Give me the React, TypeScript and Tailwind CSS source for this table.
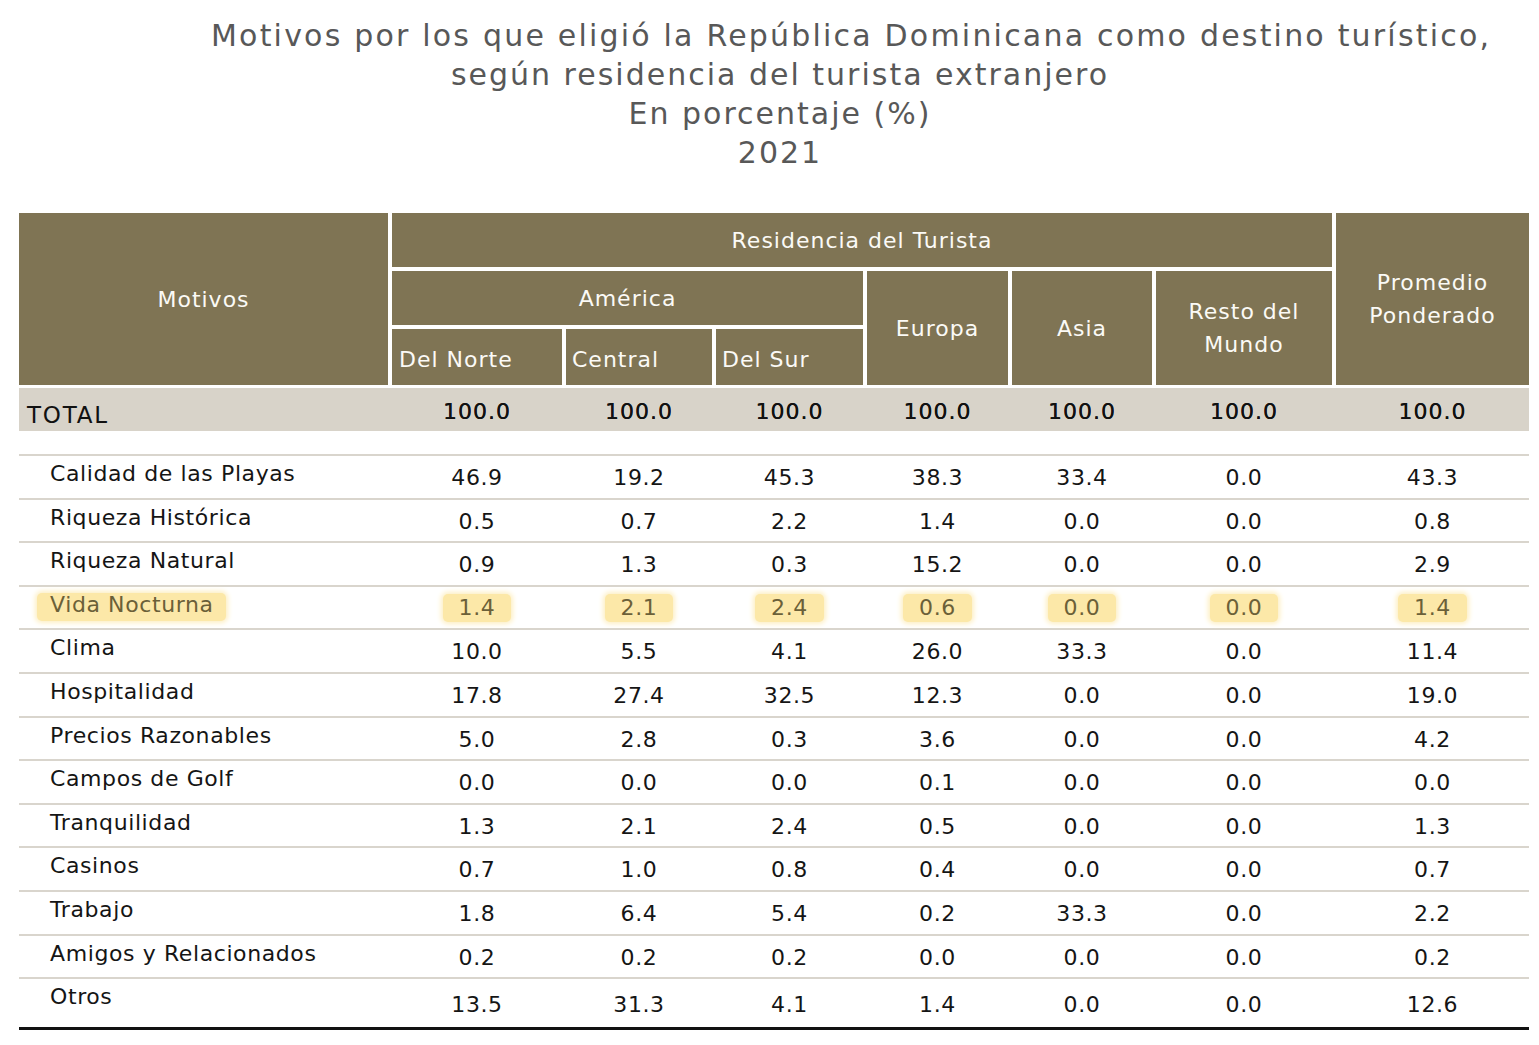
import React from "react";

const font = { fontFamily: "'DejaVu Sans', Verdana, sans-serif" };

const cols = "grid grid-cols-[369px_170px_146px_147px_141px_140px_176px_193px] gap-x-[4px]";

type Row = { label: string; values: string[]; highlight?: boolean };

const rows: Row[] = [
  { label: "Calidad de las Playas", values: ["46.9", "19.2", "45.3", "38.3", "33.4", "0.0", "43.3"] },
  { label: "Riqueza Histórica", values: ["0.5", "0.7", "2.2", "1.4", "0.0", "0.0", "0.8"] },
  { label: "Riqueza Natural", values: ["0.9", "1.3", "0.3", "15.2", "0.0", "0.0", "2.9"] },
  { label: "Vida Nocturna", values: ["1.4", "2.1", "2.4", "0.6", "0.0", "0.0", "1.4"], highlight: true },
  { label: "Clima", values: ["10.0", "5.5", "4.1", "26.0", "33.3", "0.0", "11.4"] },
  { label: "Hospitalidad", values: ["17.8", "27.4", "32.5", "12.3", "0.0", "0.0", "19.0"] },
  { label: "Precios Razonables", values: ["5.0", "2.8", "0.3", "3.6", "0.0", "0.0", "4.2"] },
  { label: "Campos de Golf", values: ["0.0", "0.0", "0.0", "0.1", "0.0", "0.0", "0.0"] },
  { label: "Tranquilidad", values: ["1.3", "2.1", "2.4", "0.5", "0.0", "0.0", "1.3"] },
  { label: "Casinos", values: ["0.7", "1.0", "0.8", "0.4", "0.0", "0.0", "0.7"] },
  { label: "Trabajo", values: ["1.8", "6.4", "5.4", "0.2", "33.3", "0.0", "2.2"] },
  { label: "Amigos y Relacionados", values: ["0.2", "0.2", "0.2", "0.0", "0.0", "0.0", "0.2"] },
  { label: "Otros", values: ["13.5", "31.3", "4.1", "1.4", "0.0", "0.0", "12.6"] },
];

const head = "bg-[#7f7454] text-[#fbfaf6] text-[22px] leading-[33px] tracking-[1px]";

function Glow({ children, className = "" }: { children: React.ReactNode; className?: string }) {
  return (
    <span className={`block h-[28px] rounded-[5px] bg-[#fce8a8] shadow-[0_0_5px_2px_#fdefc3] ${className}`}>
      {children}
    </span>
  );
}

export default function App() {
  return (
    <div className="w-[1539px] h-[1045px] bg-white overflow-hidden" style={font}>
      {/* Title */}
      <div className="pt-[16px] text-[30px] leading-[39px] text-[#585858] tracking-[2px]">
        <p className="pl-[211px] whitespace-nowrap tracking-[2.2px]">
          Motivos por los que eligió la República Dominicana como destino turístico,
        </p>
        <div className="w-[1560px] text-center">
          <p>según residencia del turista extranjero</p>
          <p>En porcentaje (%)</p>
          <p>2021</p>
        </div>
      </div>

      <div className="ml-[19px] w-[1510px] mt-[41px]">
        {/* Header */}
        <div className={`${cols} grid-rows-[54px_54px_56px] gap-y-[4px]`}>
          <div className={`${head} row-span-3 flex items-center justify-center`}>Motivos</div>
          <div className={`${head} col-span-6 flex items-center justify-center`}>Residencia del Turista</div>
          <div className={`${head} row-span-3 flex items-center justify-center text-center`}>
            Promedio
            <br />
            Ponderado
          </div>
          <div className={`${head} col-span-3 flex items-center justify-center`}>América</div>
          <div className={`${head} row-span-2 flex items-center justify-center`}>Europa</div>
          <div className={`${head} row-span-2 flex items-center justify-center`}>Asia</div>
          <div className={`${head} row-span-2 flex items-center justify-center text-center`}>
            Resto del
            <br />
            Mundo
          </div>
          <div className={`${head} col-start-2 flex items-center pl-[7px] pt-[4px]`}>Del Norte</div>
          <div className={`${head} flex items-center pl-[6px] pt-[4px]`}>Central</div>
          <div className={`${head} flex items-center pl-[6px] pt-[4px]`}>Del Sur</div>
        </div>

        {/* Total */}
        <div className={`${cols} mt-[3px] h-[43px] bg-[#d8d3c9] text-[22px] text-[#111]`}>
          <div className="pl-[8px] pt-[10px] text-[23px] tracking-[1.8px]">TOTAL</div>
          {["100.0", "100.0", "100.0", "100.0", "100.0", "100.0", "100.0"].map((v, i) => (
            <div key={i} className="text-center pt-[7px] tracking-[1px] [text-shadow:0_0_0.5px_#111]">
              {v}
            </div>
          ))}
        </div>

        {/* Body */}
        <div className="mt-[23px] border-b-[3px] border-[#111]">
          {rows.map((r, idx) => {
            const last = idx === rows.length - 1;
            return (
              <div
                key={r.label}
                className={`${cols} border-t-[2.5px] border-[#d9d5cd] text-[22px] tracking-[0.6px] ${
                  last ? "h-[50px]" : "h-[43.6px]"
                } ${r.highlight ? "text-[#6b6038]" : "text-[#151515]"}`}
              >
                {r.highlight ? (
                  <div className="flex items-start pl-[18px] pt-[6.5px]">
                    <Glow className="pl-[13px] pr-[12px] leading-[24px]">{r.label}</Glow>
                  </div>
                ) : (
                  <div className="pl-[31px] pt-[4px] leading-[28px]">{r.label}</div>
                )}
                {r.values.map((v, i) =>
                  r.highlight ? (
                    <div key={i} className="flex justify-center items-start pt-[7px]">
                      <Glow className="px-[16px] leading-[28px]">{v}</Glow>
                    </div>
                  ) : (
                    <div key={i} className={`text-center leading-[28px] ${last ? "pt-[12px]" : "pt-[8px]"}`}>
                      {v}
                    </div>
                  )
                )}
              </div>
            );
          })}
        </div>
      </div>
    </div>
  );
}
